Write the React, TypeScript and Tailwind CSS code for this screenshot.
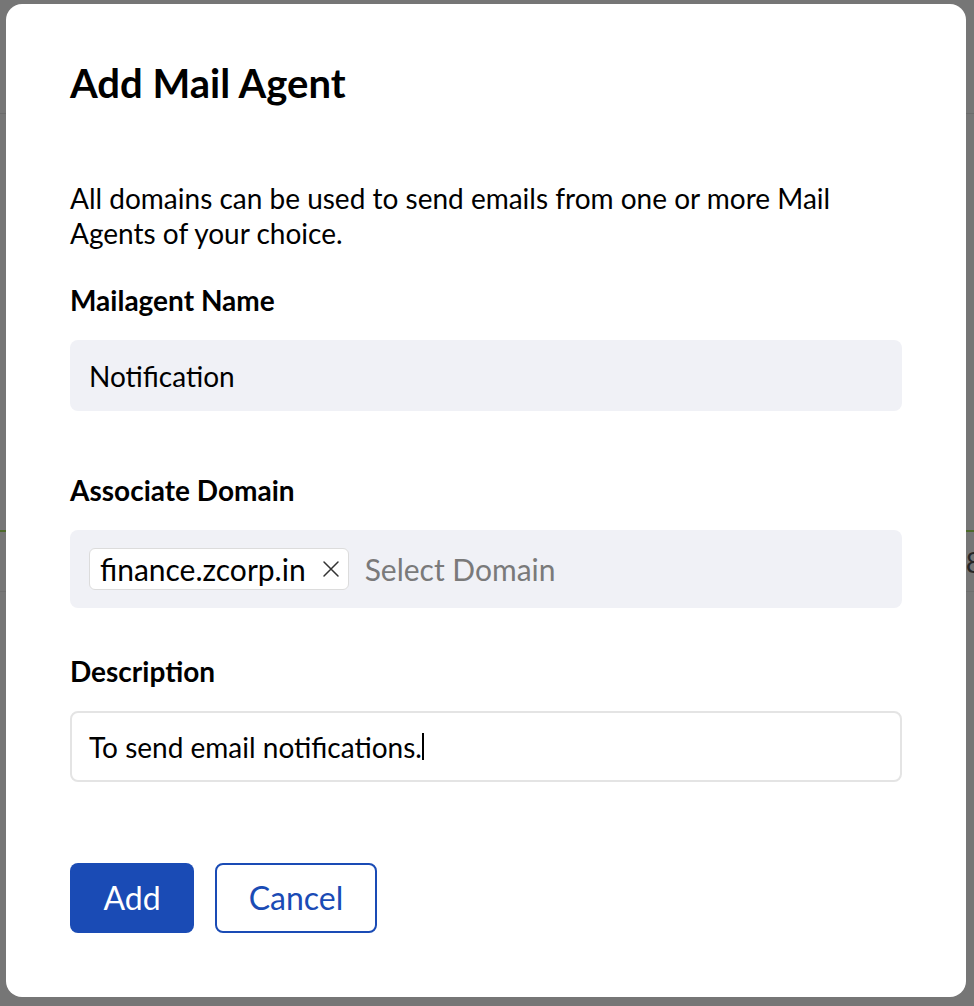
import React from "react";

export default function App() {
  const font = { fontFamily: "Lato, 'Noto Sans', sans-serif" };
  return (
    <div className="relative w-full h-[1006px] overflow-hidden bg-[#767676]" style={font}>
      {/* underlying page, dimmed */}
      <div className="flex flex-col">
        <div className="h-[114px] border-b border-[#6b6b6b]" />
        <div className="h-[416px]" />
        <div className="h-[2px] bg-[#4e6a2c]" />
        <div className="h-[60px] border-b border-[#6e6e6e] flex justify-end items-center">
          <span className="text-[28px] leading-[30px] text-[#262626] mr-[-8px]">8</span>
        </div>
      </div>

      {/* modal */}
      <div className="absolute left-[6px] top-[4px] w-[960px] h-[993px] rounded-[16px] bg-white pl-[64px] pr-[64px] pt-[59px] flex flex-col text-black">
        <h1 className="text-[40px] leading-[40px] font-bold">Add Mail Agent</h1>

        <p className="mt-[78px] text-[28px] leading-[35px] w-[800px]">
          All domains can be used to send emails from one or more Mail Agents of your choice.
        </p>

        <label className="mt-[34px] text-[28px] leading-[30px] font-bold">Mailagent Name</label>
        <div className="mt-[25px] h-[71px] w-[832px] rounded-[8px] bg-[#f0f1f6] flex items-center pl-[19px] text-[28px]">
          Notification
        </div>

        <label className="mt-[64px] text-[28px] leading-[30px] font-bold">Associate Domain</label>
        <div className="mt-[25px] h-[78px] w-[832px] rounded-[8px] bg-[#f0f1f6] flex items-center pl-[19px] gap-[16px] text-[30px]">
          <div className="h-[42px] flex items-center bg-white border border-[#dcdcdc] rounded-[6px] pl-[10px] pr-[8px] gap-[16px]">
            <span>finance.zcorp.in</span>
            <svg width="18" height="18" viewBox="0 0 18 18" fill="none">
              <path d="M2 2 L16 16 M16 2 L2 16" stroke="#333" strokeWidth="1.5" strokeLinecap="round" />
            </svg>
          </div>
          <span className="text-[#7a7a7a]">Select Domain</span>
        </div>

        <label className="mt-[48px] text-[28px] leading-[30px] font-bold">Description</label>
        <div className="mt-[25px] h-[71px] w-[832px] rounded-[8px] bg-white border-2 border-[#e4e4e4] flex items-center pl-[17px] text-[28px]">
          <span>To send email notifications.</span>
          <span className="inline-block w-[2px] h-[27px] bg-black" />
        </div>

        <div className="mt-[81px] flex gap-[21px]">
          <button className="h-[70px] w-[124px] rounded-[8px] bg-[#1a4bb5] text-white text-[32px]">Add</button>
          <button className="h-[70px] w-[162px] rounded-[8px] border-2 border-[#1a4bb5] text-[#1a4bb5] text-[32px] bg-white">Cancel</button>
        </div>
      </div>
    </div>
  );
}
